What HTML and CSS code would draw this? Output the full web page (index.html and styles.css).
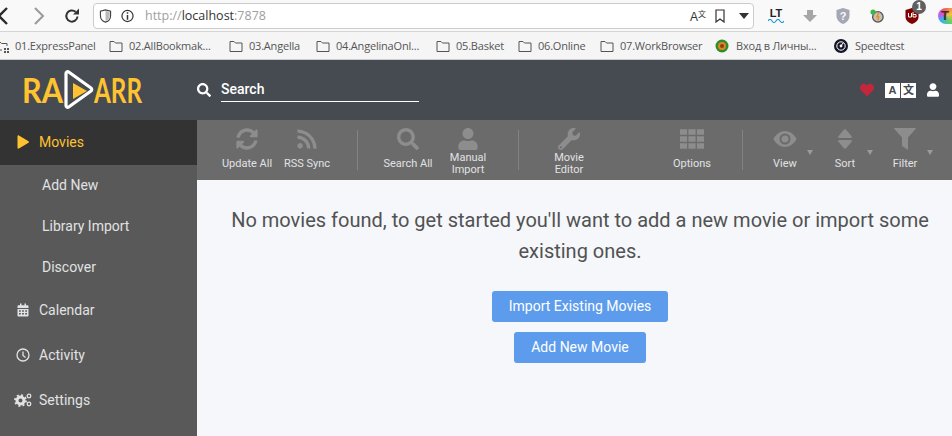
FILE: index.html
```html
<!DOCTYPE html>
<html lang="en">
<head>
<meta charset="utf-8">
<title>Radarr</title>
<link rel="stylesheet" href="styles.css">
</head>
<body>
<div class="browser-bar">
  <svg class="nav back" viewBox="0 0 16 20"><path d="M10 2 2 10l8 8" fill="none" stroke="#2b2b2b" stroke-width="2.4"/></svg>
  <svg class="nav fwd" viewBox="0 0 16 20"><path d="M3 2l8 8-8 8" fill="none" stroke="#9a9a9a" stroke-width="2"/></svg>
  <svg class="nav reload" viewBox="0 0 16 16"><path d="M13.5 8.5A5.6 5.6 0 1 1 11.6 3.8" fill="none" stroke="#333" stroke-width="2"/><path d="M15 0.5v6h-6z" fill="#333"/></svg>
  <div class="address">
    <svg class="addr-ico" viewBox="0 0 14 16"><path d="M7 1 1.2 2.6v5C1.2 11.4 4 14 7 15c3-1 5.800-3.600 5.800-7.400v-5z" fill="none" stroke="#444" stroke-width="1.300"/><path d="M7 2v12c2-1 4.800-3 4.800-6.400V3.400z" fill="#bbb"/></svg>
    <svg class="addr-ico info" viewBox="0 0 14 14"><circle cx="7" cy="7" r="6" fill="none" stroke="#333" stroke-width="1.300"/><path d="M6.200 3h1.600v1.600H6.200zM6.200 6h1.600v5H6.200z" fill="#333"/></svg>
    <span class="url"><span class="dim">http://</span>localhost<span class="dim">:7878</span></span>
    <span class="addr-a">A<sup>文</sup></span>
    <svg class="addr-book" viewBox="0 0 10 14"><path d="M1 1h8v12L5 10l-4 3z" fill="none" stroke="#333" stroke-width="1.200"/></svg>
    <svg class="addr-drop" viewBox="0 0 10 6"><path d="M0 0h10L5 6z" fill="#333"/></svg>
  </div>
  <div class="ext-icons">
    <span class="ext lt">LT<svg viewBox="0 0 16 4"><path d="M0 2q2-3 4 0t4 0 4 0 4 0" fill="none" stroke="#1c9ad6" stroke-width="1.200"/></svg></span>
    <svg class="ext" viewBox="0 0 14 14"><path d="M4 1h6v5h4l-7 7-7-7h4z" fill="#a6a6a6"/></svg>
    <svg class="ext" viewBox="0 0 14 16"><path d="M7 0 .5 2v6C.5 12 4 15 7 16c3-1 6.500-4 6.500-8V2z" fill="#a4a8b4"/><text x="7" y="12" class="ext-q">?</text></svg>
    <svg class="ext" viewBox="0 0 16 16"><circle cx="9" cy="9" r="6" fill="#c9c0b0" stroke="#555" stroke-width="1.500"/><path d="M10 4 8 9h2l-1 4" fill="none" stroke="#e8891c" stroke-width="1.500"/><circle cx="3.500" cy="3.500" r="3" fill="#3fb54a"/></svg>
    <div class="ublock">
      <svg class="ext" viewBox="0 0 14 16"><path d="M7 0 .5 2v7C.5 12.500 4 15 7 16c3-1 6.500-3.500 6.500-7V2z" fill="#800000"/><path d="M3.500 5v4h3V5M8 4v5h3V6.500H8" fill="none" stroke="#fff" stroke-width="1"/></svg>
      <span class="ublock-badge">1</span>
    </div>
    <span class="ext t-ball">T</span>
  </div>
</div>
<div class="bookmarks">
  <div class="bm first"><svg class="bm-ico" viewBox="0 0 14 14"><path d="M1 3h3l1.500 1.500H11V7" fill="none" stroke="#555"/><path d="M1 3v8h5" fill="none" stroke="#555"/><path d="M8 9h2v2H8zM11 9h2v2h-2zM8 12h2v2H8zM11 12h2v2h-2z" fill="#555"/></svg><span>01.ExpressPanel</span></div>
  <div class="bm"><svg class="bm-ico" viewBox="0 0 14 12"><path d="M1 1.500h4l1.500 1.500H13v8.500H1z" fill="none" stroke="#555"/></svg><span>02.AllBookmak...</span></div>
  <div class="bm"><svg class="bm-ico" viewBox="0 0 14 12"><path d="M1 1.500h4l1.500 1.500H13v8.500H1z" fill="none" stroke="#555"/></svg><span>03.Angella</span></div>
  <div class="bm"><svg class="bm-ico" viewBox="0 0 14 12"><path d="M1 1.500h4l1.500 1.500H13v8.500H1z" fill="none" stroke="#555"/></svg><span>04.AngelinaOnl...</span></div>
  <div class="bm"><svg class="bm-ico" viewBox="0 0 14 12"><path d="M1 1.500h4l1.500 1.500H13v8.500H1z" fill="none" stroke="#555"/></svg><span>05.Basket</span></div>
  <div class="bm"><svg class="bm-ico" viewBox="0 0 14 12"><path d="M1 1.500h4l1.500 1.500H13v8.500H1z" fill="none" stroke="#555"/></svg><span>06.Online</span></div>
  <div class="bm"><svg class="bm-ico" viewBox="0 0 14 12"><path d="M1 1.500h4l1.500 1.500H13v8.500H1z" fill="none" stroke="#555"/></svg><span>07.WorkBrowser</span></div>
  <div class="bm"><svg class="bm-round" viewBox="0 0 14 14"><circle cx="7" cy="7" r="6.500" fill="#2e8b2e"/><circle cx="7" cy="7" r="4" fill="#d98a1f"/><circle cx="7" cy="7" r="2" fill="#8f3b1c"/></svg><span class="bm-gap">Вход в Личны...</span></div>
  <div class="bm"><svg class="bm-round" viewBox="0 0 14 14"><circle cx="7" cy="7" r="7" fill="#141526"/><circle cx="7" cy="7" r="4.200" fill="none" stroke="#fff" stroke-width="1"/><circle cx="7" cy="7" r="1.400" fill="#fff"/><path d="M7 7l2-3" stroke="#fff"/></svg><span class="bm-gap">Speedtest</span></div>
</div>
<header class="header">
  <div class="logo">
    <svg class="logo-svg" viewBox="0 0 175 60">
      <text class="logo-text" x="0" y="43" textLength="41" lengthAdjust="spacingAndGlyphs">RA</text>
      <path d="M44 13.500c0-1.500 1.500-2.300 2.700-1.500L69 28c1 .8 1 2.200 0 3L46.700 47c-1.200.8-2.700 0-2.700-1.500z" fill="none" stroke="#fff" stroke-width="3.200" stroke-linejoin="round"/>
      <path d="M51 23 65 31 51 39z" fill="#ffc230"/>
      <text class="logo-text" x="72" y="43" textLength="48" lengthAdjust="spacingAndGlyphs">ARR</text>
    </svg>
  </div>
  <div class="search">
    <svg class="search-ico" viewBox="0 0 512 512"><path d="M505 442.700L405.300 343c-4.500-4.500-10.600-7-17-7H372c27.600-35.300 44-79.700 44-128C416 93.100 322.900 0 208 0S0 93.100 0 208s93.100 208 208 208c48.300 0 92.700-16.400 128-44v16.300c0 6.400 2.500 12.500 7 17l99.700 99.700c9.400 9.400 24.600 9.400 33.900 0l28.300-28.300c9.400-9.400 9.400-24.600.1-34zM208 336c-70.700 0-128-57.200-128-128 0-70.700 57.200-128 128-128 70.700 0 128 57.200 128 128 0 70.700-57.200 128-128 128z"/></svg>
    <span class="search-field">Search</span>
  </div>
  <div class="header-right">
    <svg class="heart" viewBox="0 0 512 512"><path d="M462.300 62.600C407.500 15.900 326 24.300 275.700 76.200L256 96.500l-19.700-20.300C186.100 24.300 104.500 15.900 49.700 62.600c-62.800 53.600-66.100 149.800-9.900 207.900l193.500 199.800c12.500 12.900 32.800 12.900 45.300 0l193.500-199.800c56.300-58.100 53-154.300-9.800-207.900z"/></svg>
    <div class="lang"><span class="lang-a">A</span><span class="lang-b">文</span></div>
    <svg class="user" viewBox="0 0 448 512"><path d="M224 256c70.700 0 128-57.300 128-128S294.700 0 224 0 96 57.300 96 128s57.300 128 128 128zm89.600 32h-16.700c-22.200 10.200-46.900 16-72.900 16s-50.600-5.800-72.900-16h-16.700C60.200 288 0 348.200 0 422.400V464c0 26.500 21.500 48 48 48h352c26.500 0 48-21.500 48-48v-41.600c0-74.200-60.200-134.400-134.400-134.400z"/></svg>
  </div>
</header>
<div class="app">
  <nav class="sidebar">
    <div class="nav-item active"><svg class="nav-ico" viewBox="0 0 12 14"><path d="M.5 1.200c0-.8.800-1.200 1.400-.8l9.600 5.800c.6.400.6 1.200 0 1.600l-9.600 5.800c-.6.400-1.400 0-1.400-.8z" fill="#ffc230"/></svg><span>Movies</span></div>
    <div class="nav-sub">Add New</div>
    <div class="nav-sub">Library Import</div>
    <div class="nav-sub">Discover</div>
    <div class="nav-item"><svg class="nav-ico" viewBox="0 0 12 14"><path d="M.5 3.500c0-.8.500-1.300 1.200-1.300H3V.5h1.500v1.700h3V.5H9v1.700h1.300c.7 0 1.200.5 1.200 1.300V5H.5zM.5 6h11v6.500c0 .6-.5 1-1 1h-9c-.5 0-1-.4-1-1zm1.500 1.200v1.500h1.800V7.200zm3.100 0v1.500h1.800V7.200zm3.100 0v1.500H10V7.200zM2 10v1.500h1.800V10zm3.100 0v1.500h1.800V10zm3.100 0v1.500H10V10z" fill="#e1e2e3" fill-rule="evenodd"/></svg><span>Calendar</span></div>
    <div class="nav-item"><svg class="nav-ico clock" viewBox="0 0 14 14"><circle cx="7" cy="7" r="6" fill="none" stroke="#e1e2e3" stroke-width="1.300"/><path d="M7 3.500V7.500L9.500 9.500" fill="none" stroke="#e1e2e3" stroke-width="1.300"/></svg><span>Activity</span></div>
    <div class="nav-item"><svg class="nav-ico cogs" viewBox="0 0 18 14"><circle cx="6.500" cy="7.500" r="3.500" fill="none" stroke="#e1e2e3" stroke-width="3"/><circle cx="6.500" cy="7.500" r="5.500" fill="none" stroke="#e1e2e3" stroke-width="1.800" stroke-dasharray="2 2.300"/><circle cx="15" cy="3" r="1.800" fill="none" stroke="#e1e2e3" stroke-width="1.300"/><circle cx="15" cy="11" r="1.800" fill="none" stroke="#e1e2e3" stroke-width="1.300"/></svg><span>Settings</span></div>
  </nav>
  <main class="main">
    <div class="toolbar">
      <div class="tool-group">
        <div class="tool"><svg class="tool-ico" viewBox="0 0 512 512"><path d="M370.720 133.280C339.458 104.008 298.888 87.962 255.848 88c-77.458.068-144.328 53.178-162.791 126.850-1.344 5.363-6.122 9.150-11.651 9.150H24.103c-7.498 0-13.194-6.807-11.807-14.176C33.933 94.924 134.813 8 256 8c66.448 0 126.791 26.136 171.315 68.685L463.030 40.970C478.149 25.851 504 36.559 504 57.941V192c0 13.255-10.745 24-24 24H345.941c-21.382 0-32.090-25.851-16.971-40.971l41.750-41.749zM32 296h134.059c21.382 0 32.090 25.851 16.971 40.971l-41.750 41.750c31.262 29.273 71.835 45.319 114.876 45.280 77.418-.07 144.315-53.144 162.787-126.849 1.344-5.363 6.122-9.150 11.651-9.150h57.304c7.498 0 13.194 6.807 11.807 14.176C478.067 417.076 377.187 504 256 504c-66.448 0-126.791-26.136-171.315-68.685L48.970 471.030C33.851 486.149 8 475.441 8 454.059V320c0-13.255 10.745-24 24-24z"/></svg><span class="tool-label">Update All</span></div>
        <div class="tool"><svg class="tool-ico" viewBox="0 0 448 512"><path d="M128.081 415.959c0 35.369-28.672 64.041-64.041 64.041S0 451.328 0 415.959s28.672-64.041 64.041-64.041 64.040 28.673 64.040 64.041zm175.660 47.250c-8.354-154.600-132.185-278.587-286.950-286.950C7.656 175.765 0 183.105 0 192.253v48.069c0 8.415 6.490 15.472 14.887 16.018 111.832 7.284 201.473 96.702 208.772 208.772.547 8.397 7.604 14.887 16.018 14.887h48.069c9.149.001 16.489-7.655 15.995-16.790zm144.249.288C439.596 229.677 251.465 40.445 16.503 32.010 7.473 31.686 0 38.981 0 48.016v48.068c0 8.625 6.835 15.645 15.453 15.999 191.179 7.839 344.627 161.316 352.465 352.465.353 8.618 7.373 15.453 15.999 15.453h48.068c9.034-.001 16.329-7.474 16.005-16.504z"/></svg><span class="tool-label">RSS Sync</span></div>
      </div>
      <div class="tool-sep"></div>
      <div class="tool-group">
        <div class="tool"><svg class="tool-ico" viewBox="0 0 512 512"><path d="M505 442.700L405.300 343c-4.500-4.500-10.600-7-17-7H372c27.600-35.300 44-79.700 44-128C416 93.100 322.900 0 208 0S0 93.100 0 208s93.100 208 208 208c48.300 0 92.700-16.400 128-44v16.300c0 6.400 2.500 12.500 7 17l99.700 99.700c9.400 9.400 24.600 9.400 33.900 0l28.300-28.300c9.400-9.400 9.400-24.600.1-34zM208 336c-70.700 0-128-57.200-128-128 0-70.700 57.200-128 128-128 70.700 0 128 57.200 128 128 0 70.700-57.200 128-128 128z"/></svg><span class="tool-label">Search All</span></div>
        <div class="tool"><svg class="tool-ico" viewBox="0 0 448 512"><path d="M224 256c70.700 0 128-57.300 128-128S294.700 0 224 0 96 57.300 96 128s57.300 128 128 128zm89.600 32h-16.700c-22.200 10.200-46.900 16-72.900 16s-50.600-5.800-72.900-16h-16.700C60.200 288 0 348.200 0 422.400V464c0 26.500 21.500 48 48 48h352c26.500 0 48-21.500 48-48v-41.600c0-74.200-60.200-134.400-134.400-134.400z"/></svg><span class="tool-label">Manual<br>Import</span></div>
      </div>
      <div class="tool-sep"></div>
      <div class="tool-group">
        <div class="tool"><svg class="tool-ico" viewBox="0 0 512 512"><path d="M507.730 109.100c-2.240-9.030-13.540-12.090-20.120-5.510l-74.360 74.360-67.880-11.310-11.310-67.880 74.360-74.360c6.620-6.620 3.430-17.900-5.660-20.160-47.380-11.740-99.550.91-136.580 37.930-39.640 39.640-50.550 97.100-34.050 147.200L18.740 402.760c-24.990 24.990-24.990 65.510 0 90.500 24.990 24.990 65.510 24.990 90.500 0l213.210-213.210c50.120 16.710 107.470 5.680 147.370-34.220 37.070-37.070 49.700-89.320 37.910-136.730zM64 472c-13.250 0-24-10.750-24-24 0-13.260 10.750-24 24-24s24 10.740 24 24c0 13.250-10.750 24-24 24z"/></svg><span class="tool-label">Movie<br>Editor</span></div>
      </div>
      <div class="tool-group right-start">
        <div class="tool"><svg class="tool-ico" viewBox="0 0 22 20"><path d="M0 1h6.500v5H0zM7.700 1h6.600v5H7.700zM15.500 1H22v5h-6.500zM0 7.500h6.500v5H0zM7.700 7.500h6.600v5H7.700zM15.500 7.500H22v5h-6.500zM0 14h6.500v5H0zM7.700 14h6.600v5H7.700zM15.500 14H22v5h-6.500z"/></svg><span class="tool-label">Options</span></div>
      </div>
      <div class="tool-sep sep-tight"></div>
      <div class="tool-group">
        <div class="tool menu"><svg class="tool-ico" viewBox="0 0 24 18"><path fill-rule="evenodd" d="M12 1C6.500 1 2.500 5 .4 9c2.100 4 6.100 8 11.600 8s9.500-4 11.600-8C21.500 5 17.500 1 12 1zm0 2.500a5.500 5.500 0 1 1 0 11 5.500 5.500 0 0 1 0-11zm0 2a3.500 3.500 0 1 0 0 7 3.500 3.500 0 0 0 0-7z"/></svg><span class="tool-label">View</span></div>
        <div class="tool menu"><svg class="tool-ico" viewBox="0 0 14 20"><path d="M6 1.500c.5-.6 1.500-.6 2 0l5 6c.6.700.2 1.500-.6 1.500H1.600C.8 9 .4 8.200 1 7.500zM1.600 11h10.800c.8 0 1.200.8.600 1.500l-5 6c-.5.600-1.500.6-2 0l-5-6c-.6-.7-.2-1.500.6-1.500z"/></svg><span class="tool-label">Sort</span></div>
        <div class="tool menu"><svg class="tool-ico" viewBox="0 0 22 22"><path d="M.5 0h21c.4 0 .6.500.3.800L14 9.500V22l-6-4V9.500L.2.800C-.1.500.1 0 .5 0z"/></svg><span class="tool-label">Filter</span></div>
      </div>
    </div>
    <section class="empty">
      <p class="empty-text">No movies found, to get started you'll want to add a new movie or import some existing ones.</p>
      <div class="empty-btn btn-import">Import Existing Movies</div>
      <div class="empty-btn btn-add">Add New Movie</div>
    </section>
  </main>
</div>
</body>
</html>
```
FILE: styles.css
```css
* { box-sizing: border-box; }
html, body { margin: 0; height: 436px; overflow: hidden; }
body { font-family: Roboto, "Liberation Sans", sans-serif; background: #f5f7fa; }
svg { display: block; flex: none; }

.browser-bar { height: 32px; background: #f9f9fa; border-bottom: 1px solid #d4d4d4; display: flex; align-items: center; overflow: hidden; }
.nav.back { width: 16px; height: 20px; margin-left: -3px; }
.nav.fwd { width: 16px; height: 20px; margin-left: 19px; }
.nav.reload { width: 16px; height: 16px; margin-left: 16px; }
.address { flex: none; margin-left: 13px; width: 661px; height: 26px; background: #fff; border: 1px solid #ccc; border-radius: 4px; display: flex; align-items: center; font: 12.5px "Open Sans", sans-serif; color: #333; padding-left: 5px; }
.addr-ico { width: 13px; height: 14px; }
.addr-ico.info { margin-left: 9px; }
.url { margin-left: 11px; flex: 1; }
.dim { color: #a0a0a0; }
.addr-a { font: 12px "Liberation Sans", sans-serif; color: #333; width: 18px; position: relative; top: 1px; }
.addr-a sup { font: 8px "Noto Sans CJK SC", sans-serif; position: relative; top: -2px; vertical-align: top; }
.addr-book { width: 10px; height: 14px; margin-left: 7px; }
.addr-drop { width: 10px; height: 6px; margin-left: 14px; margin-right: 4px; }
.ext-icons { flex: none; margin-left: 14px; display: grid; grid-template-columns: 35px 33px 34px 35px 33px 14px; align-items: center; }
.ext { width: 14px; height: 16px; }
.ext-q { font: bold 11px "Liberation Sans", sans-serif; fill: #f9f9fa; text-anchor: middle; }
.lt { width: 16px; height: auto; font: bold 11px/10px "Liberation Sans", sans-serif; color: #222; text-align: center; }
.lt svg { width: 16px; height: 4px; margin-top: 1px; }
.ublock { position: relative; width: 15px; height: 16px; }
.ublock-badge { position: absolute; left: 7px; top: -8px; width: 14px; height: 14px; border-radius: 50%; background: #5f5f5f; color: #fff; font: bold 10px/14px "Liberation Sans", sans-serif; text-align: center; }
.t-ball { width: 14px; height: 16px; border-radius: 8px 0 0 8px; background: conic-gradient(#f65a5a, #f6c33a, #5bd06c, #3ab0f6, #c45af6, #f65a5a); font: bold 13px/16px "Liberation Sans", sans-serif; color: #333; text-align: center; }

.bookmarks { height: 28px; background: #f5f5f5; border-bottom: 1px solid #ccc; display: grid; grid-template-columns: 109px 120px 87px 120px 82px 82px 115px 119px 1fr; align-items: center; font: 11px "Open Sans", sans-serif; letter-spacing: -0.2px; color: #555; overflow: hidden; }
.bm { display: flex; align-items: center; white-space: nowrap; }
.bm.first { margin-left: -4px; }
.bm-ico { width: 14px; height: 12px; margin-right: 6px; }
.first .bm-ico { height: 14px; margin-right: 5px; }
.bm-round { width: 14px; height: 14px; }
.bm-gap { margin-left: 7px; }

.header { height: 60px; background: #464b51; display: flex; align-items: center; }
.logo { width: 197px; padding-left: 22px; height: 60px; flex: none; }
.logo-svg { width: 175px; height: 60px; }
.logo-text { font: 700 34px Lato, sans-serif; fill: #ffc230; }
.search { display: flex; align-items: center; }
.search-ico { width: 14px; height: 14px; fill: #fff; margin-right: 10px; }
.search-field { width: 198px; height: 24px; border-bottom: 1px solid #fff; color: #fff; font-size: 14px; font-weight: 500; line-height: 23px; }
.header-right { margin-left: auto; display: flex; align-items: center; padding-right: 13px; }
.heart { width: 14px; height: 14px; fill: #c4273c; margin-right: 11px; }
.lang { display: flex; gap: 1px; margin-right: 11px; }
.lang span { width: 15px; height: 15px; background: #fff; color: #464b51; font: bold 11px/15px "Liberation Sans", "Noto Sans CJK SC", sans-serif; text-align: center; }
.user { width: 12px; height: 14px; fill: #fff; }

.app { display: flex; height: 316px; }
.sidebar { width: 197px; background: #595959; flex: none; color: #e1e2e3; font-size: 14px; }
.nav-item { height: 45px; display: flex; align-items: center; padding: 0 0 2px 17px; }
.nav-item span { margin-left: 10px; }
.nav-item.active { background: #333; color: #ffc230; }
.nav-ico { width: 12px; height: 14px; }
.clock { width: 14px; margin: 0 -1px; }
.cogs { width: 18px; margin-left: -3px; margin-right: -3px; }
.nav-sub { height: 41px; line-height: 41px; padding-left: 42px; }

.main { flex: 1; min-width: 0; }
.toolbar { height: 60px; background: #6b6b6b; display: flex; padding-left: 20px; }
.tool-group { display: flex; }
.right-start { margin-left: 63px; }
.tool-sep { width: 1px; height: 40px; margin: 10px 20px 0; background: #838383; }
.sep-tight { margin-right: 12px; }
.tool { width: 60px; padding-top: 8px; display: flex; flex-direction: column; align-items: center; position: relative; }
.tool-ico { height: 22px; width: 24px; fill: #8d8d8d; }
.tool-label { height: 24px; margin-top: 2px; font-size: 11px; line-height: 12px; color: #e1e2e3; text-align: center; display: flex; align-items: center; white-space: nowrap; }
.menu::after { content: ""; position: absolute; right: 2px; top: 30px; border: 3px solid transparent; border-top: 5px solid #9a9a9a; border-bottom: 0; }

.empty { padding: 25px 0 0 11px; display: flex; flex-direction: column; align-items: center; }
.empty-text { margin: 0 0 24px; width: 720px; font-size: 20px; line-height: 31px; text-align: center; color: #515253; }
.empty-btn { height: 31px; line-height: 31px; margin-bottom: 10px; background: #5d9cec; border-radius: 3px; color: #fff; font-size: 14px; text-align: center; }
.btn-import { width: 176px; }
.btn-add { width: 132px; }
```
